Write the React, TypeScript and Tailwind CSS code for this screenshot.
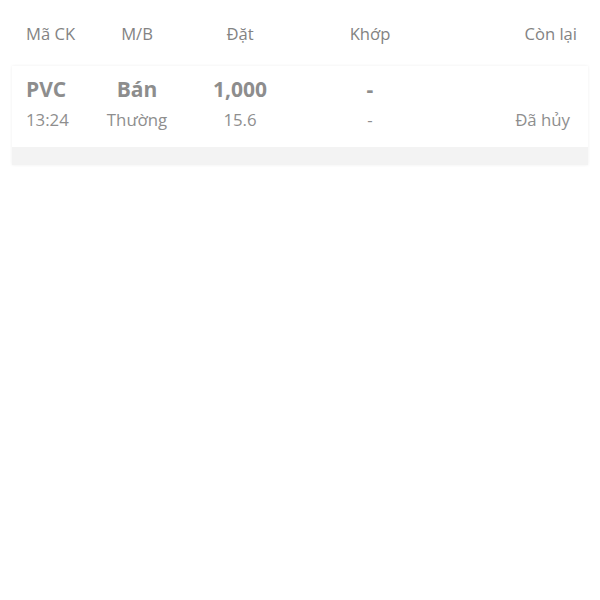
import React from 'react';

const cols = ['w-[62px] text-left', 'w-[98px] text-center', 'w-[108px] text-center', 'w-[152px] text-center', 'flex-1 text-right'];

const App: React.FC = () => {
  return (
    <div className="w-[600px] h-[600px] bg-white" style={{ fontFamily: '"Open Sans", "Noto Sans", sans-serif' }}>
      <div className="flex items-center h-[66px] pt-[3px] pl-[26px] pr-[23px] text-[16.6px] text-[#838383]">
        <div className={cols[0]}>Mã CK</div>
        <div className={cols[1]}>M/B</div>
        <div className={cols[2]}>Đặt</div>
        <div className={cols[3]}>Khớp</div>
        <div className={cols[4]}>Còn lại</div>
      </div>

      <div className="mx-[12px] bg-white shadow-[0_0_3px_rgba(0,0,0,0.07)]">
        <div className="pt-[10px] pb-[15px] pl-[14px] pr-[18px]">
          <div className="flex items-center h-[28px] text-[21px] font-bold text-[#8d8d8d]">
            <div className={cols[0]}>PVC</div>
            <div className={cols[1]}>Bán</div>
            <div className={cols[2]}>1,000</div>
            <div className={cols[3]}>-</div>
            <div className={cols[4]}></div>
          </div>
          <div className="flex items-center h-[24px] mt-[4px] text-[16.8px] text-[#8e8e8e]">
            <div className={cols[0]}>13:24</div>
            <div className={cols[1]}>Thường</div>
            <div className={cols[2]}>15.6</div>
            <div className={cols[3]}>-</div>
            <div className={cols[4]}>Đã hủy</div>
          </div>
        </div>
        <div className="h-[18px] bg-[#f3f3f3]" />
      </div>
    </div>
  );
};

export default App;
